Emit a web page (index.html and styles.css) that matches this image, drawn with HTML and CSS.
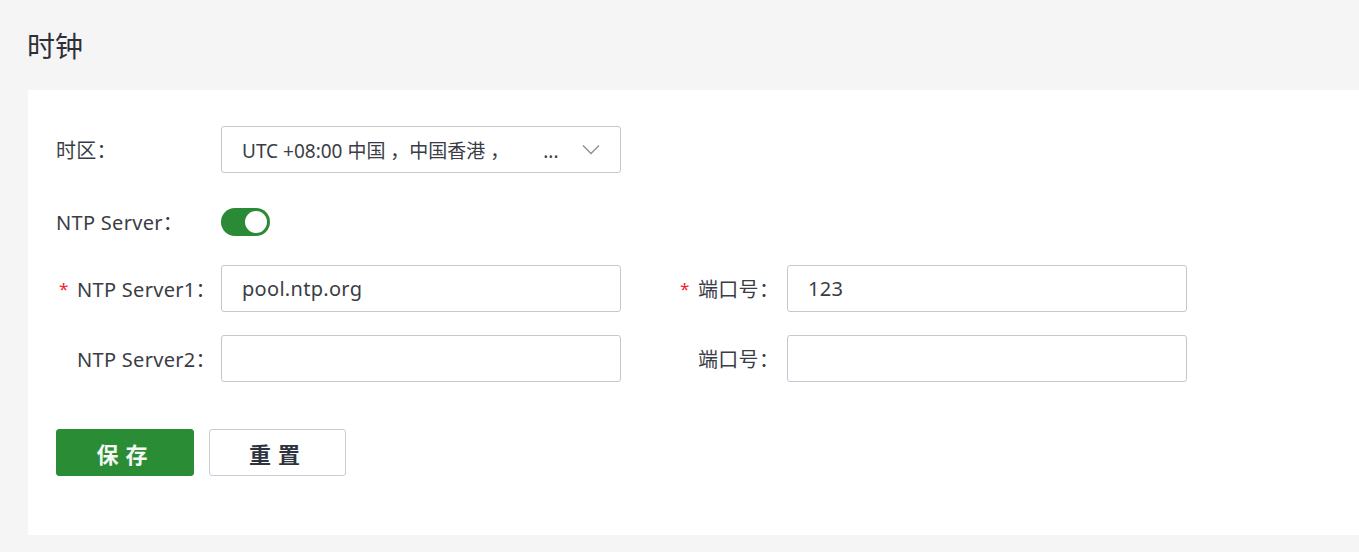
FILE: index.html
```html
<!DOCTYPE html>
<html lang="zh-CN">
<head>
<meta charset="utf-8">
<link rel="stylesheet" href="styles.css">
</head>
<body>
<div class="page">
  <h1 class="title">时钟</h1>
  <div class="card">
    <div class="row row-tz">
      <div class="label">时区：</div>
      <div class="select">
        <span class="select-text">UTC +08:00 中国 ，中国香港 ，<span class="ellipsis">...</span></span>
        <svg class="chev" width="18" height="11" viewBox="0 0 18 11"><path d="M1 1.5 L9 9.5 L17 1.5" fill="none" stroke="#8a8f99" stroke-width="1.4"/></svg>
      </div>
    </div>
    <div class="row row-switch">
      <div class="label">NTP Server：</div>
      <div class="switch"><span class="knob"></span></div>
    </div>
    <div class="row">
      <div class="field">
        <div class="label label-req"><span class="star">*</span>NTP Server1：</div>
        <div class="input">pool.ntp.org</div>
      </div>
      <div class="field field-right">
        <div class="label label-req label-right"><span class="star">*</span>端口号：</div>
        <div class="input">123</div>
      </div>
    </div>
    <div class="row">
      <div class="field">
        <div class="label label-req"><span class="star star-hidden">*</span>NTP Server2：</div>
        <div class="input"></div>
      </div>
      <div class="field field-right">
        <div class="label label-req label-right"><span class="star star-hidden">*</span>端口号：</div>
        <div class="input"></div>
      </div>
    </div>
    <div class="actions">
      <button class="btn btn-primary">保存</button>
      <button class="btn btn-default">重置</button>
    </div>
  </div>
</div>
</body>
</html>
```
FILE: styles.css
```css
* { box-sizing: border-box; }
html, body { margin: 0; padding: 0; }
body {
  background: #f5f5f5;
  font-family: "Noto Sans", "Noto Sans CJK SC", sans-serif;
  color: #33363d;
  width: 1359px;
  height: 552px;
  overflow: hidden;
}
.page { padding: 0 0 0 28px; }
.title {
  margin: 0;
  height: 90px;
  display: flex;
  align-items: center;
  font-size: 28px;
  font-weight: 400;
  color: #2e3039;
  transform: translateX(-1px);
}
.card {
  background: #fff;
  height: 445px;
  padding: 36px 0 0 28px;
}
.row {
  display: flex;
  align-items: center;
  height: 47px;
  margin-bottom: 23px;
}
.row-tz { margin-bottom: 25px; }
.row-switch { margin-bottom: 20px; }
.label {
  width: 165px;
  font-size: 20px;
  letter-spacing: 0.3px;
  color: #3a3d45;
  white-space: nowrap;
}
.label-req { display: flex; align-items: center; }
.star {
  color: #f5222d;
  width: 21px;
  padding-left: 3px;
  font-size: 17px;
}
.star-hidden { visibility: hidden; }
.label-right { width: 110px; }
.field { display: flex; align-items: center; }
.field-right { margin-left: 56px; }
.select, .input {
  width: 400px;
  height: 47px;
  border: 1px solid #c4c7d0;
  border-radius: 3px;
  background: #fff;
  display: flex;
  align-items: center;
  padding: 0 20px;
  font-size: 20px;
  letter-spacing: 0.3px;
  color: #3a3d45;
}
.select {
  justify-content: space-between;
  font-size: 19px;
  letter-spacing: 0;
}
.select-text { white-space: nowrap; }
.ellipsis { margin-left: 34px; }
.chev { margin-right: 0; }
.switch {
  width: 49px;
  height: 28px;
  border-radius: 14px;
  background: #2b8a36;
  position: relative;
}
.knob {
  position: absolute;
  right: 3px;
  top: 3px;
  width: 22px;
  height: 22px;
  border-radius: 50%;
  background: #fff;
}
.actions {
  display: flex;
  gap: 15px;
  margin-top: 47px;
}
.btn {
  width: 138px;
  height: 47px;
  border-radius: 3px;
  font-family: "Noto Sans CJK SC", sans-serif;
  font-size: 22px;
  font-weight: 700;
  letter-spacing: 7px;
  padding-left: 7px;
  cursor: pointer;
}
.btn-primary {
  background: #2a8c34;
  color: #f4f8f4;
  border: 1px solid #2a8c34;
}
.btn-default {
  width: 137px;
  background: #fff;
  color: #2e3340;
  border: 1px solid #c9ccd6;
}
```
